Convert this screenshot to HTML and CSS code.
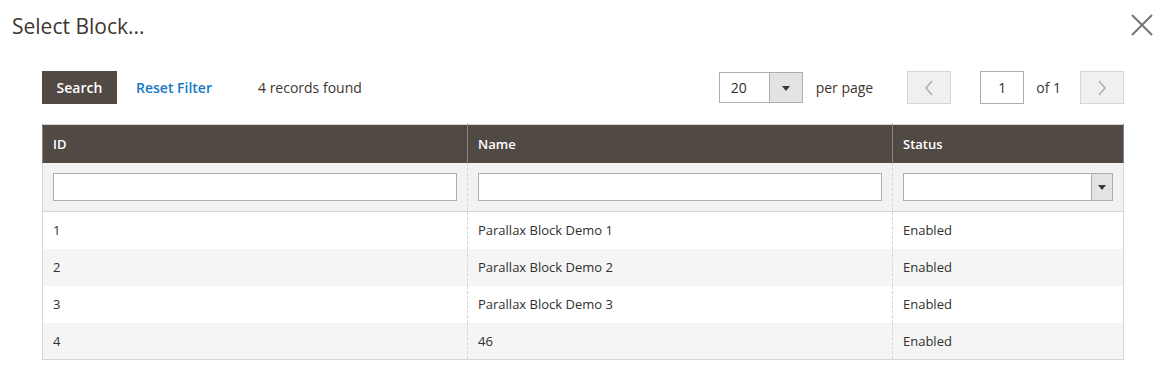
FILE: index.html
```html
<!DOCTYPE html>
<html lang="en">
<head>
    <meta charset="UTF-8">
    <title>Select Block...</title>
    <link rel="stylesheet" href="styles.css">
</head>
<body>
    <div class="modal">
        <header class="modal-header">
            <h1 class="modal-title">Select Block...</h1>
            <button class="action-close" aria-label="Close">
                <svg width="22" height="22" viewBox="0 0 22 22"><path d="M1 1 L21 21 M21 1 L1 21" stroke="#757575" stroke-width="2" fill="none"/></svg>
            </button>
        </header>

        <div class="grid">
            <div class="toolbar">
                <button class="btn-search">Search</button>
                <a class="reset" href="#">Reset Filter</a>
                <span class="found">4 records found</span>

                <div class="pager">
                    <div class="limit">
                        <span class="limit-value">20</span>
                        <span class="limit-toggle"><i class="arrow-down"></i></span>
                    </div>
                    <span class="per-page">per page</span>
                    <button class="page-btn"><svg width="10" height="16" viewBox="0 0 10 16"><path d="M8 1 L2 8 L8 15" stroke="#adadad" stroke-width="1.5" fill="none"/></svg></button>
                    <input class="page-input" type="text" value="1">
                    <span class="of">of 1</span>
                    <button class="page-btn"><svg width="10" height="16" viewBox="0 0 10 16"><path d="M2 1 L8 8 L2 15" stroke="#adadad" stroke-width="1.5" fill="none"/></svg></button>
                </div>
            </div>

            <table class="data-grid">
                <thead>
                    <tr>
                        <th class="col-id">ID</th>
                        <th class="col-name">Name</th>
                        <th>Status</th>
                    </tr>
                    <tr class="filters">
                        <td><input type="text"></td>
                        <td><input type="text"></td>
                        <td>
                            <div class="select">
                                <span class="select-toggle"><i class="arrow-down"></i></span>
                            </div>
                        </td>
                    </tr>
                </thead>
                <tbody>
                    <tr><td>1</td><td>Parallax Block Demo 1</td><td>Enabled</td></tr>
                    <tr><td>2</td><td>Parallax Block Demo 2</td><td>Enabled</td></tr>
                    <tr><td>3</td><td>Parallax Block Demo 3</td><td>Enabled</td></tr>
                    <tr><td>4</td><td>46</td><td>Enabled</td></tr>
                </tbody>
            </table>
        </div>
    </div>
</body>
</html>
```

FILE: styles.css
```css
* {
    margin: 0;
    padding: 0;
    box-sizing: border-box;
}
body {
    background: #fff;
    font-family: 'Open Sans', 'Liberation Sans', sans-serif;
    color: #333;
    font-size: 14px;
}
.modal-header {
    display: flex;
    justify-content: space-between;
    align-items: flex-start;
    height: 71px;
    padding: 10px 12px 0 12px;
}
.modal-title {
    font-size: 21px;
    font-weight: 400;
    color: #41362f;
    line-height: 32px;
}
.action-close {
    background: none;
    border: none;
    margin-top: 4px;
    margin-right: 0;
    cursor: pointer;
}
.grid {
    padding: 0 41px 0 42px;
}
.toolbar {
    display: flex;
    align-items: center;
    height: 33px;
    margin-bottom: 20px;
}
.btn-search {
    background: #514943;
    color: #fff;
    border: none;
    font-family: inherit;
    font-size: 14px;
    font-weight: 600;
    width: 75px;
    height: 33px;
}
.reset {
    color: #1979c3;
    font-weight: 600;
    text-decoration: none;
    margin-left: 19px;
}
.found {
    margin-left: 46px;
    color: #41362f;
}
.pager {
    margin-left: auto;
    display: flex;
    align-items: center;
}
.limit {
    display: flex;
    width: 84px;
    height: 31px;
    border: 1px solid #adadad;
}
.limit-value {
    flex: 1;
    padding-left: 11px;
    line-height: 29px;
    color: #303030;
}
.limit-toggle, .select-toggle {
    width: 33px;
    background: #e3e3e3;
    border-left: 1px solid #adadad;
    display: flex;
    align-items: center;
    justify-content: center;
}
.arrow-down {
    width: 0;
    height: 0;
    border-left: 4px solid transparent;
    border-right: 4px solid transparent;
    border-top: 5px solid #41362f;
    margin-top: 2px;
}
.per-page {
    margin-left: 13px;
    color: #41362f;
}
.page-btn {
    width: 44px;
    height: 33px;
    background: #f0f0f0;
    border: 1px solid #d6d6d6;
    display: flex;
    align-items: center;
    justify-content: center;
}
.per-page + .page-btn {
    margin-left: 34px;
}
.page-input {
    width: 44px;
    height: 33px;
    margin-left: 29px;
    border: 1px solid #adadad;
    font-family: inherit;
    font-size: 14px;
    text-align: center;
    color: #303030;
}
.of {
    margin-left: 12px;
    margin-right: 19px;
    color: #41362f;
}
.data-grid {
    width: 1082px;
    border-collapse: collapse;
    border: 1px solid #d6d6d6;
    table-layout: fixed;
}
.data-grid th {
    background: #514943;
    color: #fff;
    font-size: 13px;
    font-weight: 600;
    text-align: left;
    height: 38px;
    padding: 0 10px;
    border-left: 1px solid #8a837f;
    border-right: 1px solid #8a837f;
}
.col-id, .col-name {
    width: 425px;
}
.data-grid td {
    font-size: 13px;
    color: #303030;
    height: 37px;
    padding: 0 10px;
    border-left: 1px dashed #d6d6d6;
}
.data-grid td:first-child {
    border-left: none;
}
.data-grid tbody tr:nth-child(even) td {
    background: #f5f5f5;
}
.filters td {
    background: #f2f2f2;
    height: 49px;
    border-bottom: 1px solid #d6d6d6;
}
.filters input {
    width: 100%;
    height: 28px;
    border: 1px solid #adadad;
    background: #fff;
    display: block;
}
.select {
    display: flex;
    justify-content: flex-end;
    height: 28px;
    border: 1px solid #adadad;
    background: #fff;
}
.select-toggle {
    width: 21px;
}
```
